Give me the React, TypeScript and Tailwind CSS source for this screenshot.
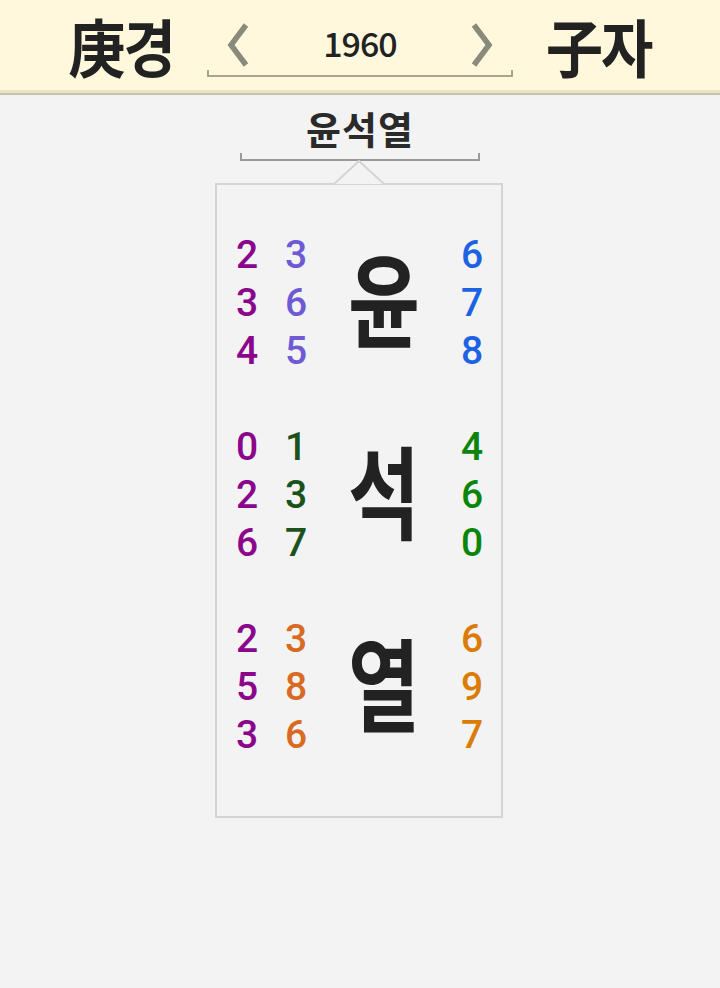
import React from 'react';

const FONT = { fontFamily: '"Noto Sans CJK KR", "Noto Sans", sans-serif' };

type Row = {
  char: string;
  a: string[];
  b: string[];
  c: string[];
  bColor: string;
  cColor: string;
};

const ROWS: Row[] = [
  { char: '윤', a: ['2', '3', '4'], b: ['3', '6', '5'], c: ['6', '7', '8'], bColor: 'text-[#6f5ad6]', cColor: 'text-[#1c62e2]' },
  { char: '석', a: ['0', '2', '6'], b: ['1', '3', '7'], c: ['4', '6', '0'], bColor: 'text-[#1b521b]', cColor: 'text-[#0a840a]' },
  { char: '열', a: ['2', '5', '3'], b: ['3', '8', '6'], c: ['6', '9', '7'], bColor: 'text-[#d86a22]', cColor: 'text-[#da7c05]' },
];

function Chevron({ dir }: { dir: 'left' | 'right' }) {
  return (
    <svg width="32" height="46" viewBox="0 0 32 46" className="shrink-0">
      <polyline
        points={dir === 'left' ? '25,3 10,23 25,43' : '7,3 22,23 7,43'}
        fill="none"
        stroke="#8a8a7c"
        strokeWidth="5.5"
      />
    </svg>
  );
}

function Digits({ items, color }: { items: string[]; color: string }) {
  return (
    <div className={`w-[40px] flex flex-col ${color}`}>
      {items.map((d, i) => (
        <div key={i} className="h-[48px] flex items-center justify-center">
          <span className="text-[39px] leading-none font-medium" style={{ fontFamily: 'Roboto, sans-serif' }}>{d}</span>
        </div>
      ))}
    </div>
  );
}

export default function App() {
  return (
    <div className="min-h-[988px] bg-[#f3f3f3]" style={FONT}>
      {/* Header */}
      <div className="bg-[#fff8dd]">
        <div className="h-[90px] flex items-center justify-center gap-[33px]">
          <div className="text-[57px] font-bold text-[#222] leading-none scale-y-[1.1] tracking-[-2px]">庚경</div>
          <div className="relative w-[306px] h-[90px] flex items-center justify-between px-[14px]">
            <Chevron dir="left" />
            <div className="text-[34px] font-medium text-[#222] leading-none tracking-[-1px] -mt-[4px]">1960</div>
            <Chevron dir="right" />
            <div className="absolute left-0 right-0 top-[70px] h-[7px] border-x-2 border-b-2 border-[#a8a48f]" />
          </div>
          <div className="text-[57px] font-bold text-[#222] leading-none scale-y-[1.1] tracking-[-2px]">子자</div>
        </div>
      </div>
      <div className="h-[3px] bg-[#ebe3c6]" />
      <div className="h-[2px] bg-[#c8c0a8]" />

      {/* Name */}
      <div className="flex flex-col items-center">
        <div className="mt-[8px] text-[38px] font-bold text-[#2a2a2a] leading-[50px] tracking-[1px]">윤석열</div>
        <div className="w-[240px] h-[8px] border-x-2 border-b-2 border-[#9a9a9a]" />

        {/* Card */}
        <div className="relative mt-[22px] w-[288px] -translate-x-[1px] border-2 border-[#d4d4d4] pt-[46px] pb-[57px]">
          <svg
            width="50"
            height="26"
            viewBox="0 0 50 26"
            className="absolute left-1/2 -translate-x-1/2 -top-[25px]"
          >
            <polygon points="0,24 25,1 50,24" fill="#f3f3f3" />
            <polyline points="0,24 25,1 50,24" fill="none" stroke="#d4d4d4" strokeWidth="2" />
          </svg>
          <div className="flex flex-col gap-[48px]">
            {ROWS.map((r) => (
              <div key={r.char} className="flex pl-[10px]">
                <Digits items={r.a} color="text-[#8b068b]" />
                <div className="w-[9px]" />
                <Digits items={r.b} color={r.bColor} />
                <div className="w-[136px] flex items-center justify-center">
                  <div className="text-[78px] font-bold text-[#222] leading-none scale-y-[1.3] -mt-[14px]">{r.char}</div>
                </div>
                <Digits items={r.c} color={r.cColor} />
              </div>
            ))}
          </div>
        </div>
      </div>
    </div>
  );
}
